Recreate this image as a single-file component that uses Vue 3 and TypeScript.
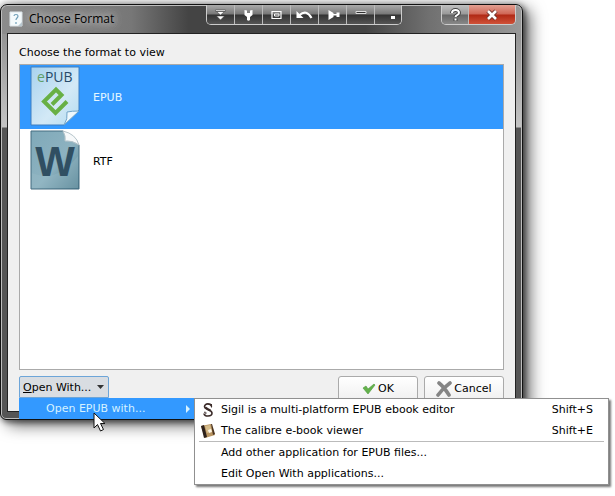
<script setup lang="ts">
import { ref } from 'vue'

interface MenuEntry {
  label: string
  shortcut?: string
  icon?: 'sigil' | 'viewer'
  separated?: boolean
}

const formats = ['EPUB', 'RTF'] as const
const selected = ref<string>('EPUB')

const tools = ['Roll up', 'Settings', 'Fit', 'Undo', 'Pin', 'Minimize', 'Tray'] as const

const entries: MenuEntry[] = [
  { label: 'Sigil is a multi-platform EPUB ebook editor', shortcut: 'Shift+S', icon: 'sigil' },
  { label: 'The calibre e-book viewer', shortcut: 'Shift+E', icon: 'viewer' },
  { label: 'Add other application for EPUB files...', separated: true },
  { label: 'Edit Open With applications...' },
]
</script>

<template>
  <main class="desktop">
    <section class="window" aria-labelledby="title">
      <header class="titlebar">
        <svg class="app-icon" viewBox="0 0 14 16" aria-hidden="true">
          <path d="M1 1h12v14H1z" fill="#f4fafc" stroke="#dce4e8" />
          <path d="M5 5c0-2 4-2 4 0 0 2-2 2-2 4M7 11v2" fill="none" stroke="#6f9fb8" stroke-width="1.2" />
          <path d="M9 15l4-4v4z" fill="#b9c8d0" />
        </svg>
        <h1 id="title">Choose Format</h1>
        <div class="tools">
          <button v-for="(tool, i) in tools" :key="tool" type="button" :aria-label="tool">
            <svg viewBox="0 0 26 18" aria-hidden="true">
              <g v-if="i === 0" fill="#fff" stroke="#333" stroke-width=".5">
                <path d="M8 4h10v1.500H8zM9 5.500h8l-4 3.500zM9 10h8l-4 4z" />
              </g>
              <path v-else-if="i === 1" d="M9 4v5l2.500 2V14q1.500 1.500 3 0v-3l2.500-2V4l-2.500 .5V7h-3V4.500z" fill="#fff" />
              <g v-else-if="i === 2" fill="none" stroke="#fff">
                <path d="M8.500 5.500h9v7h-9z" stroke-width="1.200" />
                <path d="M11 8h4.500v2H11z" />
              </g>
              <g v-else-if="i === 3">
                <path d="M8 9q7-6 12 3" fill="none" stroke="#fff" stroke-width="2.200" />
                <path d="M5 12V5l7 7z" fill="#fff" />
              </g>
              <g v-else-if="i === 4" fill="#fff">
                <path d="M9 4l5 3v4l-5 3zM14 8h3v1.500h-3zM17 6.500h3v4.500h-3z" />
              </g>
              <path v-else-if="i === 5" d="M8.500 5.500h10v2h-10z" fill="#333" stroke="#ddd" />
              <path v-else d="M16 10h4v3h-4z" fill="#fff" />
            </svg>
          </button>
        </div>
        <div class="controls">
          <button type="button" class="help" aria-label="Help">
            <svg viewBox="0 0 26 18" aria-hidden="true">
              <g fill="none" stroke-linejoin="round">
                <path d="M10 7c0-4 7-4 7 0 0 2-3.500 2-3.500 4M13.500 12.500v2.500" stroke="#444" stroke-width="4" />
                <path d="M10 7c0-4 7-4 7 0 0 2-3.500 2-3.500 4M13.500 12.500v2" stroke="#fff" stroke-width="2" />
              </g>
            </svg>
          </button>
          <button type="button" class="close" aria-label="Close">
            <svg viewBox="0 0 46 18" aria-hidden="true">
              <path d="M19 5l8 8M27 5l-8 8" stroke="#6a302a" stroke-width="4.500" />
              <path d="M19 5l8 8M27 5l-8 8" stroke="#fff" stroke-width="2.600" />
            </svg>
          </button>
        </div>
      </header>

      <div class="client">
        <p id="prompt" class="prompt">Choose the format to view</p>
        <ul class="formats" role="listbox" aria-labelledby="prompt">
          <li
            v-for="format in formats"
            :key="format"
            role="option"
            tabindex="0"
            :aria-selected="selected === format"
            :class="{ selected: selected === format }"
            @click="selected = format"
          >
            <svg v-if="format === 'EPUB'" class="file-icon" viewBox="0 0 50 60" aria-hidden="true">
              <defs>
                <linearGradient id="paper" x1="0" y1="0" x2="1" y2="1">
                  <stop offset="0" stop-color="#a9d2ee" />
                  <stop offset=".6" stop-color="#d3e9f6" />
                  <stop offset="1" stop-color="#b3dbf0" />
                </linearGradient>
              </defs>
              <path d="M1 1h48v43L34 59H1z" fill="url(#paper)" stroke="#3f7fc0" />
              <path d="M49 45q-7 0-12 1 1 7-3 13z" fill="#eef8fd" stroke="#72a5c9" />
              <text x="7" y="16" class="epub-word"><tspan fill="#5f9f68">e</tspan>PUB</text>
              <path d="M22 38.500l9.500-9.500-5.500-5.500L14 35.500 25.500 47 37 35.500" fill="none" stroke="#68b045" stroke-width="4" />
            </svg>
            <svg v-else class="file-icon" viewBox="0 0 50 60" aria-hidden="true">
              <defs>
                <linearGradient id="slate" x1="0" y1="0" x2="1" y2="1">
                  <stop offset="0" stop-color="#7fa9b9" />
                  <stop offset=".55" stop-color="#8db2c0" />
                  <stop offset="1" stop-color="#4d7b8c" />
                </linearGradient>
              </defs>
              <path d="M1 1h32l16 14v44H1z" fill="url(#slate)" stroke="#456d80" />
              <path d="M2 43q24 11 46-17v32H2z" fill="#9bbdc8" opacity=".35" />
              <path d="M33 1q3 5 2 10 7-1 14 4Q46 4 33 1z" fill="#f7f9fa" stroke="#b5c4ca" />
              <text x="25" y="46" text-anchor="middle" class="word-mark">W</text>
            </svg>
            <span>{{ format }}</span>
          </li>
        </ul>

        <footer class="actions">
          <div class="open-with">
            <button type="button" class="open-button" aria-haspopup="menu" aria-expanded="true">
              <span><u>O</u>pen With...</span>
              <svg viewBox="0 0 7 4" width="7" height="4" aria-hidden="true"><path d="M0 0h7L3.500 4z" fill="#333" /></svg>
            </button>
            <div class="menu" role="menu">
              <button type="button" class="menu-parent" role="menuitem" aria-haspopup="menu">
                <span>Open EPUB with...</span>
                <svg viewBox="0 0 4 8" width="4" height="8" aria-hidden="true"><path d="M0 0l4 4-4 4z" fill="#d5f2ff" /></svg>
              </button>
              <div class="submenu" role="menu">
                <template v-for="entry in entries" :key="entry.label">
                  <hr v-if="entry.separated" />
                  <button type="button" role="menuitem" class="entry">
                    <svg class="entry-icon" viewBox="0 0 16 16" aria-hidden="true">
                      <g v-if="entry.icon === 'sigil'" fill="none" stroke="#3b2b29">
                        <path d="M11.500 4.500C11 1 4.500 1 4.500 4.500c0 3.500 7.500 3 7.500 6.500 0 4-8 4-8 .5" stroke-width="1.600" />
                        <path d="M5.500 5.500q2 1.800 5 3" stroke-width="2.200" />
                        <path d="M11.500 2v3.500M4 10.500c2-1.500 3 1.500 1 1.500" />
                      </g>
                      <g v-else-if="entry.icon === 'viewer'">
                        <path d="M1 3l10-2 4 11-10 3z" fill="#b99562" />
                        <path d="M1 3l3-1 3 12-3 1z" fill="#2d211b" />
                        <path d="M5 3l5-1 2 6-5 2z" fill="#d6bd8c" />
                        <path d="M8 7l3-1 1 3-3 1z" fill="#fff7e8" />
                        <path d="M11 1l1 0 3 10-2 1z" fill="#4c3420" />
                      </g>
                    </svg>
                    <span>{{ entry.label }}</span>
                    <kbd v-if="entry.shortcut">{{ entry.shortcut }}</kbd>
                  </button>
                </template>
              </div>
              <svg class="pointer" viewBox="0 0 13 20" aria-hidden="true">
                <path d="M1 1v15l3.500-3.500L7.500 19l3-1.500-3-6H12z" fill="#fff" stroke="#111" />
              </svg>
            </div>
          </div>
          <div class="confirm">
            <button type="button">
              <svg viewBox="0 0 14 14" width="14" height="14" aria-hidden="true">
                <path d="M1 6l3-2 2 3 6-5 1 1-7 9z" fill="#64b24c" stroke="#4e9a3c" stroke-width=".6" />
              </svg>
              <span>OK</span>
            </button>
            <button type="button">
              <svg viewBox="0 0 16 16" width="16" height="16" aria-hidden="true">
                <path d="M3 2q5 4 10 12M14 2Q7 7 2 14" fill="none" stroke="#858585" stroke-width="3.600" stroke-linecap="round" />
              </svg>
              <span>Cancel</span>
            </button>
          </div>
        </footer>
      </div>
    </section>
  </main>
</template>

<style>
body {
  margin: 0;
  background: #fff;
}
</style>

<style scoped>
.desktop {
  box-sizing: border-box;
  display: flex;
  min-height: 100vh;
  padding: 4px 92px 76px 0;
  overflow: hidden;
  color: #000;
  font: 11px/15px "DejaVu Sans", Verdana, sans-serif;
}

button {
  box-sizing: border-box;
  margin: 0;
  padding: 0;
  color: inherit;
  font: inherit;
}

.window {
  box-sizing: border-box;
  display: flex;
  flex: 1;
  flex-direction: column;
  padding: 0 6px 7px;
  border: 1px solid #111;
  border-radius: 7px 7px 6px 6px;
  background:
    linear-gradient(90deg, #8c8c8c 0, #777 25%, #444 36%, #444 70%, #707070 82%, #999 100%) top / 100% 29px no-repeat,
    linear-gradient(#858585 0, #c4c4c4 122px, #555 123px, #555 100%);
  box-shadow:
    inset 0 0 0 1px #bdbdbd,
    0 0 6px 1px rgba(0, 0, 0, 0.3),
    3px 3px 5px rgba(0, 0, 0, 0.3),
    7px 5px 16px rgba(0, 0, 0, 0.6);
}

.titlebar {
  display: flex;
  align-items: flex-start;
  height: 28px;
  padding-left: 2px;
}

.app-icon {
  width: 14px;
  height: 16px;
  margin-top: 6px;
}

h1 {
  flex: 1;
  margin: 4px 0 0 6px;
  font: 12px/20px "Open Sans", "Segoe UI", sans-serif;
  text-shadow: 0 0 8px #ccc, 0 0 8px #bbb, 0 0 12px #aaa;
}

.tools,
.controls {
  display: flex;
  box-sizing: border-box;
  height: 20px;
  overflow: hidden;
  border: 1px solid #ccc;
  border-top: 0;
  border-radius: 0 0 5px 5px;
}

.tools {
  margin-right: 39px;
}

.tools button,
.controls button {
  display: block;
  width: 28px;
  border: 0;
  border-right: 1px solid #bbb;
  background: linear-gradient(#aaa 0, #777 48%, #333 52%, #555 100%);
}

.tools button:last-child {
  width: 26px;
  border: 0;
}

.tools svg,
.controls svg {
  display: block;
  width: 100%;
  height: 18px;
}

.controls .help {
  width: 27px;
  background: linear-gradient(#c0c0c0 0, #999 48%, #666 52%, #888 100%);
}

.controls .close {
  width: 46px;
  border: 0;
  background: linear-gradient(#e3a092 0, #cf6555 48%, #b02815 52%, #d05138 100%);
}

.client {
  display: flex;
  flex: 1;
  flex-direction: column;
  padding: 11px 11px 13px;
  border: 1px solid #222;
  background: #f0f0f0;
}

.prompt {
  margin: 0 0 4px;
}

.formats {
  flex: 1;
  margin: 0 0 6px;
  padding: 0;
  border: 1px solid #aaa;
  background: #fff;
  list-style: none;
}

.formats li {
  display: flex;
  align-items: center;
  gap: 13px;
  height: 64px;
  padding-left: 10px;
}

.formats .selected {
  background: #3399ff;
  color: #e5f7ff;
}

.file-icon {
  width: 50px;
  height: 60px;
  margin-bottom: 2px;
}

.epub-word {
  font: 14px "Open Sans", sans-serif;
  fill: #284b69;
}

.word-mark {
  font: bold 42px "Liberation Sans", sans-serif;
  fill: #304f62;
}

.actions {
  display: flex;
  align-items: flex-start;
  justify-content: space-between;
  height: 22px;
}

.open-with {
  position: relative;
}

.open-button {
  display: flex;
  align-items: center;
  gap: 6px;
  height: 22px;
  padding: 0 4px 0 3px;
  border: 1px solid #6da5d8;
  border-radius: 2px 2px 0 0;
  background: #d9dde2;
}

.confirm {
  display: flex;
  gap: 6px;
}

.confirm button {
  display: flex;
  align-items: center;
  justify-content: center;
  gap: 2px;
  width: 80px;
  height: 25px;
  border: 1px solid #aaa;
  border-radius: 3px;
  background: linear-gradient(#fff, #f0f0f0);
}

.menu {
  position: absolute;
  z-index: 2;
  top: 100%;
  left: 0;
  width: 175px;
}

.menu-parent {
  display: flex;
  align-items: center;
  justify-content: space-between;
  width: 100%;
  height: 21px;
  padding: 0 4px 0 27px;
  border: 0;
  background: #3399ff;
  color: #d5f2ff;
}

.submenu {
  position: absolute;
  top: 0;
  left: 100%;
  box-sizing: border-box;
  width: 415px;
  border: 1px solid #909090;
  background: #fff;
  box-shadow: 2px 2px 2px #777;
}

.submenu hr {
  height: 1px;
  margin: 0 4px;
  border: 0;
  background: #bbb;
}

.entry {
  display: flex;
  align-items: center;
  gap: 5px;
  width: 100%;
  height: 21px;
  padding: 0 15px 0 5px;
  border: 0;
  background: none;
}

.entry-icon {
  width: 16px;
  height: 16px;
}

.entry kbd {
  margin-left: auto;
  font: inherit;
}

.pointer {
  position: absolute;
  top: 14px;
  left: 74px;
  width: 13px;
  height: 20px;
  pointer-events: none;
}
</style>
